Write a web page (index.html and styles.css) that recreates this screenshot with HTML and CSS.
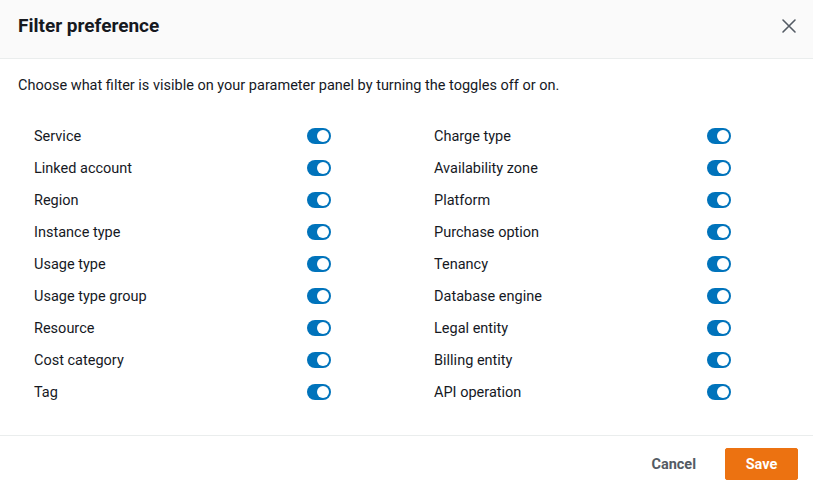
FILE: index.html
```html
<!DOCTYPE html>
<html>
<head>
<meta charset="utf-8">
<link rel="stylesheet" href="styles.css">
</head>
<body>
<div class="modal">
  <div class="header">
    <h2 class="title">Filter preference</h2>
    <button class="close" aria-label="Close">
      <svg width="16" height="16" viewBox="0 0 16 16"><path d="M2 2 L14 14 M14 2 L2 14" stroke="#545b64" stroke-width="1.6" fill="none" stroke-linecap="round"/></svg>
    </button>
  </div>
  <div class="body">
    <p class="desc">Choose what filter is visible on your parameter panel by turning the toggles off or on.</p>
    <div class="grid">
      <div class="row"><span>Service</span><span class="toggle"></span></div>
      <div class="row"><span>Charge type</span><span class="toggle"></span></div>
      <div class="row"><span>Linked account</span><span class="toggle"></span></div>
      <div class="row"><span>Availability zone</span><span class="toggle"></span></div>
      <div class="row"><span>Region</span><span class="toggle"></span></div>
      <div class="row"><span>Platform</span><span class="toggle"></span></div>
      <div class="row"><span>Instance type</span><span class="toggle"></span></div>
      <div class="row"><span>Purchase option</span><span class="toggle"></span></div>
      <div class="row"><span>Usage type</span><span class="toggle"></span></div>
      <div class="row"><span>Tenancy</span><span class="toggle"></span></div>
      <div class="row"><span>Usage type group</span><span class="toggle"></span></div>
      <div class="row"><span>Database engine</span><span class="toggle"></span></div>
      <div class="row"><span>Resource</span><span class="toggle"></span></div>
      <div class="row"><span>Legal entity</span><span class="toggle"></span></div>
      <div class="row"><span>Cost category</span><span class="toggle"></span></div>
      <div class="row"><span>Billing entity</span><span class="toggle"></span></div>
      <div class="row"><span>Tag</span><span class="toggle"></span></div>
      <div class="row"><span>API operation</span><span class="toggle"></span></div>
    </div>
  </div>
  <div class="footer">
    <button class="btn-link">Cancel</button>
    <button class="btn-primary">Save</button>
  </div>
</div>
</body>
</html>
```
FILE: styles.css
```css
* { box-sizing: border-box; }
html, body { margin: 0; padding: 0; background: #fff; }
body {
  font-family: Roboto, "Liberation Sans", sans-serif;
  color: #16191f;
  font-size: 14.5px;
  width: 813px;
  height: 491px;
  overflow: hidden;
}
.modal { width: 813px; height: 491px; display: flex; flex-direction: column; }
.header {
  height: 59px;
  background: #fafafa;
  border-bottom: 1px solid #eaeded;
  display: flex;
  align-items: flex-start;
  justify-content: space-between;
  padding: 15px 16px 0 18px;
}
.title { margin: 0; font-size: 19px; font-weight: 700; line-height: 22px; }
.close { background: none; border: 0; padding: 0; margin-top: 3px; width: 16px; height: 16px; display: flex; cursor: pointer; }
.body { padding: 17px 18px 0 18px; height: 377px; border-bottom: 1px solid #eaeded; }
.desc { margin: 0 0 24px 0; line-height: 20px; }
.grid {
  display: grid;
  grid-template-columns: 297px 297px;
  column-gap: 103px;
  padding-left: 16px;
}
.row { height: 32px; display: flex; align-items: center; justify-content: space-between; }
.toggle {
  width: 24px; height: 16px; border-radius: 8px;
  background: #0073bb; position: relative; display: block;
}
.toggle::after {
  content: ""; position: absolute; right: 2px; top: 2px;
  width: 12px; height: 12px; border-radius: 50%; background: #fff;
}
.footer {
  flex: 1;
  display: flex; align-items: flex-start; justify-content: flex-end;
  padding: 12px 15px 0 0; gap: 8px;
}
button { font-family: inherit; }
.btn-link {
  background: none; border: 0; color: #545b64; font-weight: 700; font-size: 14.5px;
  padding: 0 21px 0 20px; height: 32px;
}
.btn-primary {
  background: #ec7211; border: 1px solid #ec7211; color: #fff; font-weight: 700; font-size: 14.5px;
  width: 73px; height: 32px; border-radius: 2px;
}
```
